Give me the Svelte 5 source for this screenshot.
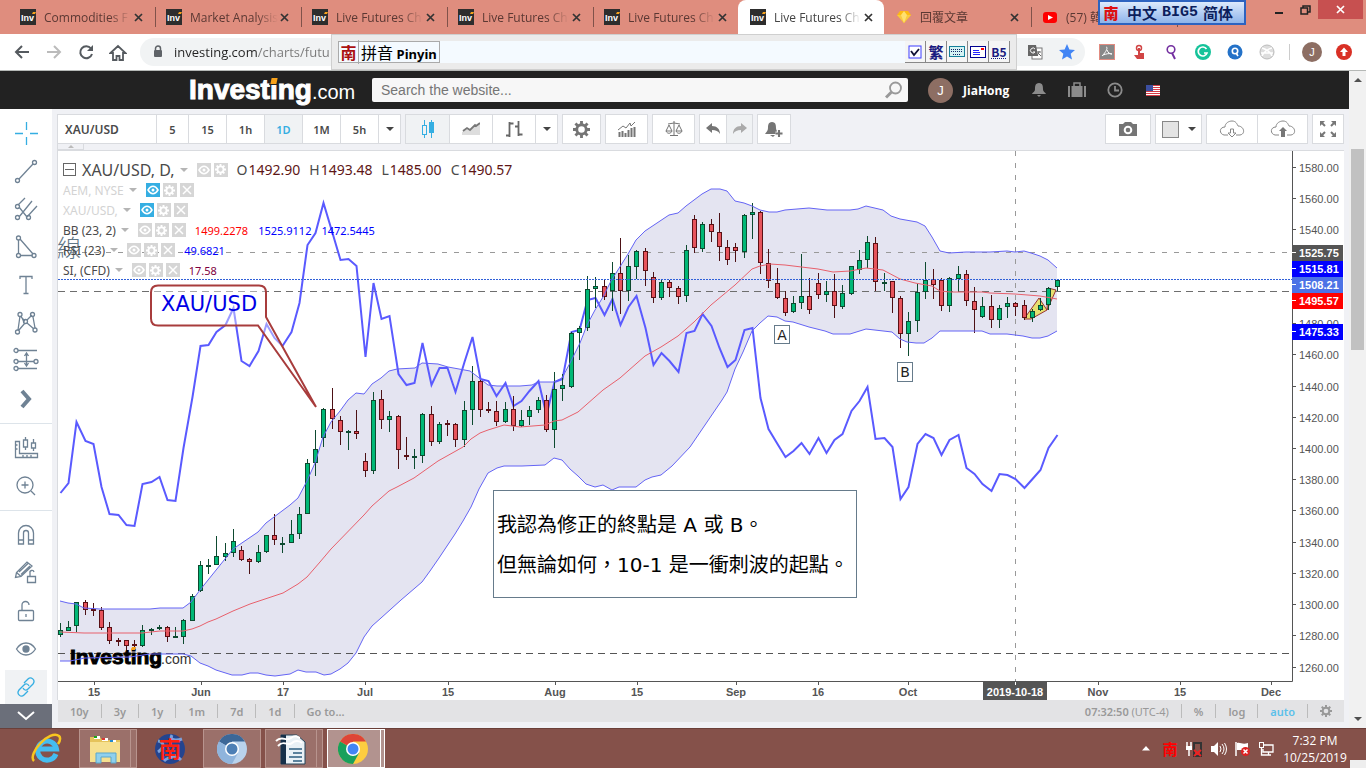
<script>
  const tabs = [
    { title: 'Commodities F', icon: 'inv' },
    { title: 'Market Analysis', icon: 'inv' },
    { title: 'Live Futures Ch', icon: 'inv' },
    { title: 'Live Futures Ch', icon: 'inv' },
    { title: 'Live Futures Ch', icon: 'inv' },
    { title: 'Live Futures Ch', icon: 'inv', active: true },
    { title: '回覆文章', icon: 'gem' },
    { title: '(57) 韓', icon: 'tube' }
  ];

  const extensions = ['pdf', 'touch', 'pin', 'grammar', 'lookup', 'globe'];
  const intervals = ['5', '15', '1h', '1D', '1M', '5h'];
  const ranges = ['10y', '3y', '1y', '1m', '7d', '1d', 'Go to...'];

  const toolGroups = [
    ['cross', 'trend', 'fork', 'shape', 'text', 'pattern', 'measure', 'more'],
    ['ruler', 'zoom'],
    ['magnet', 'pencil', 'lock', 'eye', 'link']
  ];

  const studies = [
    { name: 'AEM, NYSE', muted: true, values: [] },
    { name: 'XAU/USD,', muted: true, values: [] },
    { name: 'BB (23, 2)', values: [['1499.2278', 'red'], ['1525.9112', 'blue'], ['1472.5445', 'blue']] },
    { name: 'RSI (23)', values: [['49.6821', 'blue']] },
    { name: 'SI, (CFD)', values: [['17.58', 'wine']] }
  ];

  const ohlc = [['O', '1492.90'], ['H', '1493.48'], ['L', '1485.00'], ['C', '1490.57']];

  // high, body top, body bottom, low, direction (1 = up)
  const candles = [
    [623,630,635,637,1],[621,627,631,631,1],[602,602,626,632,1],[600,602,610,615,0],[603,609,611,616,0],
    [607,610,628,630,0],[622,627,641,644,0],[638,640,641,646,0],[640,640,646,650,0],[640,644,646,647,0],
    [625,630,646,647,1],[628,629,630,635,1],[625,627,629,630,1],[626,627,637,642,0],[627,636,637,637,1],
    [619,620,637,644,1],[594,596,621,621,1],[561,565,591,592,1],[559,565,566,574,1],[536,556,565,565,1],
    [543,553,557,561,1],[529,541,553,557,1],[546,550,560,561,0],[558,559,562,574,0],[545,552,562,563,1],
    [535,535,552,553,1],[514,535,540,545,0],[537,543,544,553,1],[520,534,543,543,1],[507,514,534,539,1],
    [459,463,514,514,1],[430,449,463,476,1],[408,409,438,447,1],[388,409,419,429,0],[416,420,432,445,0],
    [430,431,432,450,1],[410,431,434,439,0],[453,461,471,477,0],[392,400,471,474,1],[390,399,420,429,0],
    [411,416,420,432,1],[415,416,450,469,0],[437,455,457,460,0],[449,456,457,469,1],[413,414,456,463,1],
    [406,414,442,446,0],[422,424,442,444,1],[420,423,424,436,0],[423,424,440,447,0],[401,410,440,447,1],
    [366,381,410,425,1],[380,381,410,417,0],[402,409,411,413,0],[401,411,422,426,0],[402,409,422,423,1],
    [396,409,426,431,0],[410,420,426,427,1],[406,410,417,425,1],[397,400,410,413,1],[395,400,430,432,0],
    [372,389,430,448,1],[374,385,389,401,1],[332,333,387,388,1],[326,328,333,360,1],[276,289,328,331,1],
    [277,286,289,308,1],[279,286,297,300,0],[262,273,291,311,1],[238,273,291,314,0],[255,266,291,301,1],
    [250,251,267,279,1],[248,251,271,286,0],[272,277,298,303,0],[280,282,298,300,1],[280,282,288,297,0],
    [286,288,297,304,0],[245,250,296,302,1],[215,219,248,253,0],[222,224,249,252,1],[219,224,232,242,0],
    [213,232,247,261,0],[240,247,260,265,0],[243,247,251,262,0],[214,215,252,258,1],[203,212,215,239,1],
    [211,212,263,274,0],[249,263,281,288,0],[268,283,298,299,0],[291,298,313,316,0],[296,303,312,313,1],
    [254,296,303,309,1],[278,296,310,314,0],[273,283,295,299,0],[281,291,295,302,1],[274,291,306,318,0],
    [285,293,307,309,1],[266,266,294,295,1],[250,260,270,274,1],[236,242,260,268,1],[237,243,282,291,0],
    [273,282,283,291,1],[281,281,298,313,0],[296,298,334,348,0],[312,321,334,356,1],[284,292,321,332,1],
    [262,280,292,299,1],[269,279,285,299,0],[278,280,306,311,0],[277,278,306,312,1],[266,274,279,292,1],
    [270,274,301,306,0],[287,301,310,333,0],[297,306,317,318,1],[295,306,320,328,0],[305,308,320,328,1],
    [297,303,307,318,1],[302,303,307,316,0],[300,305,318,320,0],[309,311,318,322,1],[298,305,310,311,1],
    [287,288,305,310,1],[280,280,287,291,1]
  ];

  const rsi = [
    493,483,422,441,444,487,514,515,525,526,484,482,477,500,501,448,397,346,345,332,325,308,361,366,351,324,
    338,346,332,303,245,233,203,233,260,259,266,357,283,319,316,374,385,383,343,385,368,368,392,362,337,379,
    381,396,383,406,401,391,381,415,382,379,332,330,300,298,315,299,325,307,296,328,365,353,361,372,333,331,
    314,326,348,367,360,330,328,398,429,444,457,451,443,454,438,453,440,434,411,401,387,439,438,447,499,487,
    444,434,438,455,440,435,468,474,484,491,474,475,479,488,479,470,448,435
  ];

  const upper = '60,601 68,603 76,604 84,608 100,609 150,609 160,608 183,608 191,602 200,590 233,549 258,532 266,523 290,505 298,498 307,481 315,463 323,437 331,422 340,411 348,400 356,393 364,394 372,384 381,378 389,371 397,369 415,368 422,363 438,364 448,367 470,371 478,377 488,385 497,386 520,386 532,385 538,382 554,382 562,378 570,363 580,343 587,325 595,310 603,297 611,281 628,254 636,240 645,231 669,215 678,213 686,206 702,194 711,189 720,189 727,191 735,201 744,203 752,206 760,210 769,212 777,212 785,210 809,208 827,210 850,210 858,209 866,206 883,210 891,216 900,219 917,222 925,226 932,237 940,251 949,253 966,252 990,252 1007,251 1015,252 1024,251 1031,253 1040,256 1048,260 1057,268';
  const lower = '60,661 70,661 85,658 130,657 150,654 183,654 191,656 200,663 208,666 216,670 232,675 242,675 250,673 258,673 266,675 275,676 290,674 298,670 306,672 316,672 324,675 331,674 340,669 348,663 356,653 364,637 372,626 381,618 401,600 422,582 430,571 439,558 455,534 463,521 471,507 479,489 488,473 497,468 504,466 522,466 545,465 554,458 562,460 570,469 578,476 586,484 595,487 603,485 612,490 619,487 636,487 645,480 652,477 661,475 672,466 690,447 705,425 722,400 727,392 735,369 743,352 752,331 760,323 768,316 777,317 785,321 793,322 809,327 825,331 833,334 850,334 866,329 892,332 900,339 907,342 916,343 924,343 932,338 940,331 982,331 990,334 1007,334 1023,336 1032,338 1040,338 1048,336 1057,331';
  const middle = '60,632 84,633 142,633 160,631 183,631 192,629 200,626 208,622 216,619 233,611 250,604 283,593 298,584 307,577 320,562 331,549 364,515 372,506 389,491 397,487 414,478 438,461 463,447 471,439 480,433 488,430 504,425 520,427 545,425 554,421 562,420 570,416 578,412 603,390 620,378 645,356 661,347 678,336 694,322 711,305 735,285 752,269 760,266 770,264 785,265 818,269 833,272 850,271 866,268 883,270 900,279 915,283 932,286 940,291 950,292 982,292 990,293 1015,294 1040,296 1057,299';

  const barX = (i) => Math.floor(60.4 + i * 8.237);
  const band = upper + ' ' + lower.split(' ').reverse().join(' ');
  const rsiPoints = rsi.map((y, i) => `${barX(i) + 0.5},${y}`).join(' ');

  const prices = Array.from({ length: 17 }, (_, i) => ({
    label: (1580 - i * 20).toFixed(2),
    y: Math.round(168 + i * 31.22)
  }));

  const priceTags = [
    ['1525.75', 245, '#555555'],
    ['1515.81', 261, '#0000ff'],
    ['1508.21', 277, '#4c72e6'],
    ['1495.57', 293, '#ff0000'],
    ['1475.33', 324, '#0000ff']
  ];

  const dates = [
    ['15', 94], ['Jun', 201], ['17', 283], ['Jul', 365], ['15', 448], ['Aug', 555], ['15', 637],
    ['Sep', 736], ['16', 818], ['Oct', 908], ['Nov', 1098], ['15', 1180], ['Dec', 1271]
  ];

  let interval = $state('1D');
  let query = $state('');
</script>

{#snippet favicon(name)}
  <svg class="favicon" width="16" height="16" viewBox="0 0 16 16" aria-hidden="true">
    {#if name === 'inv'}
      <rect width="16" height="16" fill="#2d2d2d" />
      <text x="1" y="12" class="inv">Inv</text>
      <path d="M12 5l1-2h3l-1 2z" fill="#f7a21b" />
    {:else if name === 'gem'}
      <path d="M4 2h8l3 4-7 8-7-8z" fill="#fdb913" />
      <path d="M1 6h14l-7 8z" fill="#f9c940" /><path d="M5 6l3-4 3 4-3 8z" fill="#ffe070" />
    {:else}
      <rect x="1" y="3" width="14" height="11" rx="3" fill="#f00" /><path d="M6 6l5 2.500-5 2.500z" fill="#fff" />
    {/if}
  </svg>
{/snippet}

{#snippet tool(name)}
  <svg width="28" height="28" viewBox="0 0 28 28" fill="none" stroke="#6f8294" stroke-width="1.300" aria-hidden="true">
    {#if name === 'cross'}
      <path d="M14.500 3v8M14.500 18v8M3 14.500h8M18 14.500h8" stroke="#35aee2" />
    {:else if name === 'trend'}
      <path d="M7 22L21 7" /><circle cx="5.500" cy="23.500" r="2" /><circle cx="22.500" cy="5.500" r="2" />
    {:else if name === 'fork'}
      <path d="M7 12l8 10M7 22L20 6M8 8l5-5M15 22l10-11M6 10l7-7" /><circle cx="5.500" cy="11.500" r="2" /><circle cx="5.500" cy="22.500" r="2" /><circle cx="16.500" cy="22.500" r="2" />
    {:else if name === 'shape'}
      <path d="M6.500 7v14M8.500 22.500h12M8 6l13 15" /><circle cx="6.500" cy="5" r="2" /><circle cx="6.500" cy="22.500" r="2" /><circle cx="22" cy="22.500" r="2" />
    {:else if name === 'text'}
      <path d="M8 8V5.500h12V8M14 5.500v17M11.500 22.500h5" />
    {:else if name === 'pattern'}
      <path d="M6 21L8 7M9 8l4 4M15 11l5-5M21 8l2 11M7 21l6-7M15 14l7 6M9 7l3 6" /><circle cx="8" cy="5.500" r="2" /><circle cx="20.500" cy="5.500" r="2" /><circle cx="5.500" cy="23" r="2" /><circle cx="23" cy="21" r="2" /><circle cx="13.500" cy="12.500" r="2" />
    {:else if name === 'measure'}
      <path d="M6 3.500h19M6 14.500h16M6 21.500h19M14.500 6v13M12.500 9l2-3 2 3M12.500 16l2 3 2-3" /><circle cx="4" cy="3.500" r="2" /><circle cx="4" cy="14.500" r="2" /><circle cx="4" cy="21.500" r="2" /><circle cx="24" cy="14.500" r="2" />
    {:else if name === 'more'}
      <path d="M10 6l7 8-7 8" stroke-width="4" />
    {:else if name === 'ruler'}
      <path d="M3.500 7.500h4v12h18v4h-22zM3.500 11h2M3.500 15h2M11 21v2M15 21v2M19 21v2M13.500 3v3M13.500 13v3M21.500 5v4M21.500 14v3" /><path d="M11.500 6h4v7h-4zM19.500 9h4v5h-4z" />
    {:else if name === 'zoom'}
      <circle cx="13" cy="13" r="8" /><path d="M19 19l4 4M9.500 13h7M13 9.500v7" />
    {:else if name === 'magnet'}
      <path d="M6.500 23V12a7.500 7.500 0 0 1 15 0v11h-5V12a2.500 2.500 0 0 0-5 0v11zM6.500 19h5M16.500 19h5" />
    {:else if name === 'pencil'}
      <path d="M3.500 18.500l1-5L15 3l5 4L9 17.500zM4.500 13.500l4.500 4M7 13l9-8.500M9 15.500l9-8.500M15.500 17.500h8v6h-8zM18 17v-3a2 2 0 0 1 4-1" />
    {:else if name === 'lock'}
      <rect x="6.500" y="13.500" width="15" height="10" rx="1" /><path d="M10 13V8a3.500 3.500 0 0 1 7 0M14 17v3" />
    {:else if name === 'eye'}
      <path d="M4.500 14c5-8 14-8 19 0-5 8-14 8-19 0z" /><circle cx="14" cy="14" r="3" fill="#6f8294" />
    {:else if name === 'link'}
      <path d="M12 10l4-4c3-3 8 1 5 5l-5 5c-2 2-4 1-5-1M16 18l-4 4c-3 3-8-1-5-5l5-5c2-2 4-1 5 1" stroke="#35aee2" />
    {/if}
  </svg>
{/snippet}

{#snippet eye()}
  <svg width="14" height="14" viewBox="0 0 14 14"><path d="M2 7c3-5 7-5 10 0-3 5-7 5-10 0z" fill="none" stroke="#fff" stroke-width="1.500" /><circle cx="7" cy="7" r="1.500" fill="#fff" /></svg>
{/snippet}

{#snippet gear(color, size)}
  <svg width={size} height={size} viewBox="0 0 18 18" fill="none" stroke={color} aria-hidden="true">
    <circle cx="9" cy="9" r="5" stroke-width="3" />
    <path d="M9 0v4M9 14v4M0 9h4M14 9h4M2.600 2.600l3 3M12.400 12.400l3 3M15.400 2.600l-3 3M5.600 12.400l-3 3" stroke-width="3" />
  </svg>
{/snippet}

{#snippet chromeLogo(a, b, c, d)}
  <svg width="30" height="30" viewBox="0 0 30 30" aria-hidden="true">
    <circle cx="15" cy="15" r="15" fill={c} />
    <path d="M15 15L2 7.500A15 15 0 0 1 28 7.500H15z" fill={a} />
    <path d="M2 7.500A15 15 0 0 0 15 30l6-11-6-4z" fill={b} />
    <circle cx="15" cy="15" r="7" fill="#fff" /><circle cx="15" cy="15" r="5.500" fill={d} />
  </svg>
{/snippet}

<div class="screen">
  <div class="tabstrip">
    {#each tabs as tab}
      <div class="tab" class:active={tab.active}>
        {@render favicon(tab.icon)}
        <a class="tab-title" href="#tab">{tab.title}</a>
        <button class="tab-close" aria-label="Close tab">
          <svg width="9" height="9" viewBox="0 0 9 9"><path d="M1 1l7 7M8 1L1 8" stroke="#333" stroke-width="1.700" /></svg>
        </button>
      </div>
    {/each}
    <div class="window-buttons">
      <button aria-label="Minimize"><svg width="10" height="10" viewBox="0 0 10 10"><path d="M1 8h8" stroke="#222" stroke-width="2" /></svg></button>
      <button aria-label="Restore"><svg width="11" height="10" viewBox="0 0 11 10"><path d="M1 3h6.500v6H1zM3 3V1h7v6H8" fill="none" stroke="#222" stroke-width="1.500" /></svg></button>
      <button class="quit" aria-label="Close"><svg width="9" height="9" viewBox="0 0 9 9"><path d="M1 1l7 7M8 1L1 8" stroke="#fff" stroke-width="1.700" /></svg></button>
    </div>
    <div class="ime-badge"><b>南</b><span>中文</span><span>BIG5</span><span>简体</span></div>
  </div>

  <div class="navbar">
    <button aria-label="Back"><svg width="16" height="16" viewBox="0 0 16 16"><path d="M15 8H2M8 2L2 8l6 6" fill="none" stroke="#555a5f" stroke-width="2" /></svg></button>
    <button aria-label="Forward"><svg width="16" height="16" viewBox="0 0 16 16"><path d="M1 8h13M8 2l6 6-6 6" fill="none" stroke="#bbb" stroke-width="2" /></svg></button>
    <button aria-label="Reload"><svg width="16" height="16" viewBox="0 0 16 16"><path d="M13 4.500A6 6 0 1 0 14 10" fill="none" stroke="#555a5f" stroke-width="2" /><path d="M15 1v6H9z" fill="#555a5f" /></svg></button>
    <button aria-label="Home"><svg width="18" height="17" viewBox="0 0 18 17"><path d="M1.500 9L9 2l7.500 7H14v7h-3.500v-4h-3v4H4V9z" fill="none" stroke="#555a5f" stroke-width="1.800" /></svg></button>
    <div class="address">
      <svg width="10" height="14" viewBox="0 0 10 14" aria-hidden="true"><rect x="1" y="5" width="8" height="7" rx="1" fill="#5f6368" /><path d="M2.500 5V3.500a2.500 2.500 0 0 1 5 0V5" fill="none" stroke="#5f6368" stroke-width="1.500" /></svg>
      <input aria-label="Address" value="investing.com/charts/futu" />
      <button aria-label="Translate"><svg width="16" height="16" viewBox="0 0 16 16"><rect x="5" y="4" width="10" height="11" fill="#fff" stroke="#777" /><path d="M1 1h8l2 11H1z" fill="#666" /><path d="M8 5a2.500 2.500 0 1 0 0 3H6" fill="none" stroke="#fff" /><path d="M9.500 8H14M12 7v1l-2 4M11 9l3 3" fill="none" stroke="#666" /></svg></button>
      <button aria-label="Bookmark"><svg width="16" height="16" viewBox="0 0 16 16"><path d="M8 0l2.400 5.500 5.600.5-4.300 3.800L13 15.500 8 12.400 3 15.500l1.300-5.700L0 6l5.600-.5z" fill="#4285f4" /></svg></button>
    </div>
    {#each extensions as name}
      <button aria-label={name}>
        <svg width="16" height="16" viewBox="0 0 16 16">
          {#if name === 'pdf'}
            <rect x=".5" y=".5" width="15" height="15" fill="#888" stroke="#e28b80" /><path d="M7 3c2 0 1 4-4 9M8 6c1 3 3 4 5 4-3-1-6 0-9 1" fill="none" stroke="#fff" />
          {:else if name === 'touch'}
            <circle cx="8" cy="4" r="2.500" fill="none" stroke="#d14545" stroke-width="1.500" /><path d="M7 4h2v5h4v6H6l-3-4h4z" fill="#d14545" />
          {:else if name === 'pin'}
            <circle cx="8" cy="5.500" r="3.800" fill="none" stroke="#7430a0" stroke-width="1.600" /><path d="M9 9l3 6" stroke="#7430a0" stroke-width="2" />
          {:else if name === 'grammar'}
            <circle cx="8" cy="8" r="8" fill="#15c39a" /><path d="M11.500 5A4.500 4.500 0 1 0 12 9H9" fill="none" stroke="#fff" stroke-width="1.700" />
          {:else if name === 'lookup'}
            <circle cx="8" cy="8" r="7.500" fill="#2472c8" /><circle cx="8" cy="7" r="2.700" fill="none" stroke="#fff" stroke-width="1.600" /><path d="M9 9l2 3" stroke="#fff" stroke-width="1.600" />
          {:else}
            <circle cx="8" cy="8" r="7" fill="#ddd" stroke="#bbb" /><path d="M3 4c6 2 9 5 10 8M13 4C9 5 5 8 3 12M2 9h12" fill="none" stroke="#fff" stroke-width="1.500" />
          {/if}
        </svg>
      </button>
    {/each}
    <i class="rule"></i>
    <button aria-label="Profile"><span class="avatar small">J</span></button>
    <button aria-label="Update"><svg width="16" height="16" viewBox="0 0 16 16"><circle cx="8" cy="8" r="8" fill="#d93025" /><path d="M8 3.500l4 4.500H9.500v4h-3V8H4z" fill="#fff" /></svg></button>

    <div class="ime-bar">
      <div class="ime-name"><b>南</b><span>拼音 <strong>Pinyin</strong></span></div>
      <div class="ime-keys">
        <button aria-label="Check"><svg width="14" height="14" viewBox="0 0 14 14"><rect x="1" y="1" width="12" height="12" fill="#fff" stroke="#3c3cff" /><path d="M3 6l3 4 5-6" fill="none" stroke="#113" stroke-width="1.800" /></svg></button>
        <button>繁</button>
        <button aria-label="Keyboard"><svg width="16" height="12" viewBox="0 0 16 12"><rect x=".5" y=".5" width="15" height="10" fill="#d5f3f3" stroke="#15809a" /><path d="M2 3.500h12M2 5.500h12M4 8.500h8" stroke="#126" stroke-dasharray="1 1" /></svg></button>
        <button aria-label="Mail"><svg width="16" height="12" viewBox="0 0 16 12"><rect x=".5" y=".5" width="15" height="11" fill="#fff" stroke="#000090" /><path d="M3 4.500h6M3 6.500h7M3 8.500h7" stroke="#22f" /><rect x="11" y="2" width="3" height="2" fill="red" /></svg></button>
        <button class="b5">B5</button>
      </div>
    </div>
  </div>

  <div class="page">
    <div class="page-body">
      <header>
        <div class="header-inner">
          <a class="brand" href="#home">Inves<span class="ti">ti</span>ng<small>.com</small></a>
          <label class="search">
            <input placeholder="Search the website..." aria-label="Search the website" bind:value={query} />
            <svg width="18" height="18" viewBox="0 0 18 18" aria-hidden="true"><circle cx="10.500" cy="7" r="5.500" fill="none" stroke="#999" stroke-width="1.800" /><path d="M6.500 11L1 16.500" stroke="#999" stroke-width="3" /></svg>
          </label>
          <span class="avatar">J</span>
          <a class="user" href="#user">JiaHong</a>
          <div class="header-icons">
            <button aria-label="Alerts"><svg width="14" height="16" viewBox="0 0 14 16"><path d="M7 1c4 0 4 4 4 6 0 3 2 3 3 5H0c1-2 3-2 3-5 0-2 0-6 4-6zM5 13h4l-2 2z" fill="#8b8b8b" /></svg></button>
            <button aria-label="Portfolio"><svg width="18" height="16" viewBox="0 0 18 16"><path d="M0 4h2v11H0zM3.500 4h11v11h-11zM16 4h2v11h-2z" fill="#8b8b8b" /><path d="M6 4V1h6v3" fill="none" stroke="#8b8b8b" stroke-width="1.500" /></svg></button>
            <button aria-label="History"><svg width="16" height="16" viewBox="0 0 16 16"><circle cx="8" cy="8" r="6.700" fill="none" stroke="#8b8b8b" stroke-width="1.800" /><path d="M8 4v4.500h4" fill="none" stroke="#8b8b8b" stroke-width="1.800" /></svg></button>
            <button aria-label="Language"><svg width="14" height="11" viewBox="0 0 14 11"><rect width="14" height="11" fill="#fff" /><path d="M0 .5h14M0 2.500h14M0 4.500h14M0 6.500h14M0 8.500h14M0 10.500h14" stroke="#d43b45" /><rect width="7" height="6" fill="#3c4fa0" /></svg></button>
          </div>
        </div>
      </header>

      <main>
        <nav class="tools" aria-label="Drawing tools">
          {#each toolGroups as group}
            <div class="tool-group">
              {#each group as name}
                <button aria-label={name} class:on={name === 'link'}>{@render tool(name)}</button>
              {/each}
            </div>
          {/each}
          <button class="tools-more" aria-label="Scroll down"><svg width="20" height="12" viewBox="0 0 20 12"><path d="M2 2l8 7 8-7" fill="none" stroke="#fff" stroke-width="2" /></svg></button>
        </nav>

        <div class="workspace">
          <div class="toolbar">
            <div class="group">
              <button class="symbol">XAU/USD</button>
              {#each intervals as item}
                <button class="interval" class:on={interval === item} onclick={() => (interval = item)}>{item}</button>
              {/each}
              <button class="narrow" aria-label="More intervals"><i class="caret"></i></button>
            </div>
            <div class="group">
              <button class="wide on" aria-label="Candles"><svg width="14" height="20" viewBox="0 0 14 20"><path d="M3.500 1v18M10.500 1v18" stroke="#35aee2" /><rect x="1.500" y="6.500" width="4" height="9" fill="#f0f2f4" stroke="#35aee2" /><rect x="8" y="3" width="5" height="11" fill="#35aee2" /></svg></button>
              <button class="wide" aria-label="Area"><svg width="18" height="14" viewBox="0 0 18 14"><path d="M0 10l5-3 3 2 5-5 5-2v11H0z" fill="#ddd" /><path d="M1 9l4-3 3 2 5-5 1 1 4-3" fill="none" stroke="#777" stroke-width="1.800" /></svg></button>
              <button class="wide" aria-label="Bars"><svg width="18" height="18" viewBox="0 0 18 18"><path d="M4.500 2v15M1 15.500h3M4.500 3.500h4M13.500 1v15M10 6.500h3M13.500 14.500h4" fill="none" stroke="#666" stroke-width="1.800" /></svg></button>
              <button class="narrow" aria-label="More styles"><i class="caret"></i></button>
            </div>
            <div class="group"><button class="gear" aria-label="Settings">{@render gear('#757575', 17)}</button></div>
            <div class="group"><button class="solo" aria-label="Indicators"><svg width="18" height="16" viewBox="0 0 18 16"><path d="M1.500 16v-5M4.500 16v-6M7.500 16v-4M10.500 16V9M13.500 16V7M16.500 16V6" stroke="#757575" stroke-width="2" /><path d="M0 9l5-4 3 2 4-5 1 3 4-4" fill="none" stroke="#757575" /></svg></button></div>
            <div class="group"><button class="solo" aria-label="Compare"><svg width="18" height="16" viewBox="0 0 18 16"><path d="M3 3l6-1 6 1M9 0v14M5 14.500h8M4 4L1 10h6zM14 4l-3 6h6zM1 10c1 3 5 3 6 0M11 10c1 3 5 3 6 0" fill="none" stroke="#757575" /></svg></button></div>
            <div class="group undo">
              <button aria-label="Undo"><svg width="14" height="12" viewBox="0 0 14 12"><path d="M0 5l6-5v3c5 0 8 3 8 8-2-3-4-4-8-4v3z" fill="#757575" /></svg></button>
              <button class="off" aria-label="Redo"><svg width="14" height="12" viewBox="0 0 14 12"><path d="M14 5L8 0v3C3 3 0 6 0 11c2-3 4-4 8-4v3z" fill="#aaa" /></svg></button>
            </div>
            <div class="group"><button class="bell" aria-label="Add alert"><svg width="19" height="17" viewBox="0 0 19 17"><path d="M7 1c4 0 4 4 4 6s1 3 2 4l1 2H0c1-2 3-3 3-6 0-2 0-6 4-6zM5 14h5l-2 2z" fill="#757575" /><path d="M14 9v7M10.500 12.500h7" stroke="#f8f8f8" stroke-width="4" /><path d="M14 9v7M10.500 12.500h7" stroke="#757575" stroke-width="2" /></svg></button></div>

            <div class="group push"><button class="shot" aria-label="Snapshot"><svg width="20" height="16" viewBox="0 0 20 16"><path d="M1 3h4l2-2h6l2 2h4v12H1z" fill="#757575" /><circle cx="10" cy="9" r="3.300" fill="none" stroke="#fff" stroke-width="2" /></svg></button></div>
            <div class="group"><button class="swatch" aria-label="Background"><i></i><i class="caret"></i></button></div>
            <div class="group clouds">
              {#each ['Load', 'Save'] as name}
                <button aria-label={name}><svg width="26" height="19" viewBox="0 0 26 19"><path d="M9 15H5c-5-1-5-8 1-8 0-4 4-6 7-6 4 0 5 3 6 5 6 0 8 8 2 9h-4" fill="none" stroke="#888" />
                  {#if name === 'Load'}<path d="M11.500 9h3v4H17l-4 4-4-4h2.500z" fill="#fff" stroke="#888" />{:else}<path d="M13 7l4 4h-2v6h-4v-6H9z" fill="#777" />{/if}</svg></button>
              {/each}
            </div>
            <div class="group"><button class="full" aria-label="Full screen"><svg width="18" height="18" viewBox="0 0 18 18"><path d="M1 1h5L1 6zM17 1h-5l5 5zM1 17h5l-5-5zM17 17h-5l5-5z" fill="#777" /><path d="M2 2l4 4M16 2l-4 4M2 16l4-4M16 16l-4-4" stroke="#777" stroke-width="2" /></svg></button></div>
            <button class="fold" aria-label="Collapse"><i></i></button>
          </div>

          <section class="chart">
            <svg class="plot" viewBox="58 151 1286 549" role="img" aria-label="XAU/USD daily">
              <polygon points={band} fill="#e4e4f1" />
              <path d="M58 291.500H1292" stroke="#6e6e6e" stroke-dasharray="7 5" />
              <path d="M58 653.500H1292" stroke="#555" stroke-dasharray="7 5" />
              <path d="M58 252.500H1292M1015.500 151V681" stroke="#999" stroke-dasharray="5 7" />

              <g class="brand-mark">
                <text x="70" y="664" class="mark-bold">Investing</text>
                <text x="161" y="664" class="mark-thin">.com</text>
                <path d="M131 650l1-3h4l-1 3z" fill="#f7a21b" />
              </g>

              <polyline points={rsiPoints} class="rsi" />
              <path d="M1024 319L1039 298 1047 310 1031 319zM1047 310L1056 290 1048 288z" class="wave" />

              {#each candles as [high, top, bottom, low, up], i}
                <path d="M{barX(i) + 0.5} {high}V{low}" stroke={up ? '#0e4a30' : '#4c1115'} />
                <rect x={barX(i) - 1.5} y={top + 0.5} width="4" height={Math.max(bottom - top - 1, 1)}
                  fill={up ? '#00b876' : '#e6545c'} stroke={up ? '#0e4a30' : '#5a1015'} />
              {/each}

              <polyline points={upper} class="band-line" />
              <polyline points={lower} class="band-line" />
              <polyline points={middle} class="mid-line" />
              <path d="M58 279.500H1292" stroke="#3060d8" stroke-dasharray="2 1" />

              <path d="M158 285.500h101q7 0 7 7v24.500L316 407 258 325.500H158q-7 0-7-7v-26q0-7 7-7z" class="callout" />
              <text x="161" y="311" class="callout-text">XAU/USD</text>
              <text x="57" y="257" class="cut">線</text>

              <rect x="774.500" y="325.500" width="15" height="18" class="point" />
              <text x="782" y="340" class="point-text">A</text>
              <rect x="897.500" y="362.500" width="15" height="19" class="point" />
              <text x="905" y="377" class="point-text">B</text>

              <rect x="493.500" y="490.500" width="363" height="107" class="note" />
              <text x="497" y="532" class="note-text">我認為修正的終點是 A 或 B。</text>
              <text x="497" y="572" class="note-text">但無論如何，10-1 是一衝刺波的起點。</text>

              <path d="M1292.500 151V681.500H58" fill="none" stroke="#555" />
              {#each prices as { label, y }}
                <path d="M1292 {y - 0.5}h4" stroke="#555" />
                <text x="1299" y={y + 4} class="axis">{label}</text>
              {/each}
              {#each priceTags as [label, y, fill]}
                <rect x="1292" {y} width="51" height="16" {fill} />
                <path d="M1292 {y + 7.5}h4" stroke="#fff" />
                <text x="1299" y={y + 12} class="axis tag">{label}</text>
              {/each}
              {#each dates as [label, x]}
                <path d="M{x + 0.5} 682v3" stroke="#555" />
                <text {x} y="696" class="axis date">{label}</text>
              {/each}
              <rect x="983" y="682" width="64" height="18" fill="#555" />
              <path d="M1015.500 682v3" stroke="#fff" />
              <text x="1015" y="696" class="axis date tag">2019-10-18</text>
            </svg>

            <div class="legend">
              <div class="legend-main">
                <button class="minus" aria-label="Collapse legend"></button>
                <span>XAU/USD, D,</span><i class="caret"></i>
                <div class="study-buttons">
                  <button aria-label="Hide">{@render eye()}</button>
                  <button aria-label="Format">{@render gear('#fff', 11)}</button>
                </div>
                {#each ohlc as [key, value]}<span class="ohlc">{key}<b>{value}</b></span>{/each}
              </div>
              {#each studies as study}
                <div class="study" class:muted={study.muted}>
                  <span>{study.name}</span><i class="caret"></i>
                  <div class="study-buttons">
                    <button class:lit={study.muted} aria-label="Show">{@render eye()}</button>
                    <button aria-label="Format">{@render gear('#fff', 11)}</button>
                    <button aria-label="Remove"><svg width="12" height="12" viewBox="0 0 12 12"><path d="M2 2l8 8M10 2l-8 8" stroke="#fff" stroke-width="1.500" /></svg></button>
                  </div>
                  {#each study.values as [value, tone]}<span class="value {tone}">{value}</span>{/each}
                </div>
              {/each}
            </div>
          </section>

          <footer>
            {#each ranges as range}<button>{range}</button>{/each}
            <span class="clock">07:32:50 <small>(UTC-4)</small></span>
            <button>%</button><button>log</button><button class="auto">auto</button>
            <button aria-label="Chart settings">{@render gear('#999', 12)}</button>
          </footer>
        </div>
      </main>
    </div>
    <div class="scrollbar"><i class="up"></i><b></b><i class="down"></i></div>
  </div>

  <div class="taskbar">
    <button class="app" aria-label="Internet Explorer">
      <svg width="32" height="32" viewBox="0 0 32 32"><path d="M26 21A9.500 9.500 0 1 1 26.500 16H10" fill="none" stroke="#45bdf0" stroke-width="5" /><path d="M4 28C-3 21 20-4 29 3c2 2 1 5-1 8" fill="none" stroke="#f8c51e" stroke-width="2.500" /></svg>
    </button>
    <button class="app boxed stacked" aria-label="Explorer">
      <svg width="34" height="32" viewBox="0 0 34 32"><path d="M2 4h10l2 3h18v22H2z" fill="#e5c35b" /><path d="M6 3h6v3H6zM14 5h6v3h-6zM22 7h6v3h-6z" fill="#fff" /><path d="M6 3h3v2H6z" fill="#19a619" /><path d="M14 5h3v2h-3z" fill="#d33" /><path d="M22 7h3v2h-3z" fill="#28c" /><path d="M2 9h30v20H2z" fill="#f6e08f" /><path d="M8 30V20h20v10h-5v-6H13v6z" fill="#8fd0ee" stroke="#5aa7cc" /></svg>
    </button>
    <button class="app" aria-label="NJStar">
      <svg width="32" height="32" viewBox="0 0 32 32"><circle cx="16" cy="16" r="15" fill="#24448f" /><path d="M4 8c7 1 6 7 0 11M18 2c-3 5 4 6 10 4M10 28c5-5 13-5 17-1" fill="none" stroke="#7ca0da" stroke-width="3" /><text x="5" y="24" class="nan">南</text></svg>
    </button>
    <button class="app boxed" aria-label="Chromium">{@render chromeLogo('#3c6797', '#8fb4dc', '#b9d2ec', '#4d7fb5')}</button>
    <button class="app boxed stacked" aria-label="Writer">
      <svg width="32" height="32" viewBox="0 0 32 32"><path d="M6 2h16l8 7v22H6z" fill="#e9f1f6" stroke="#23445a" /><path d="M6 2h5v29H6z" fill="#16304a" /><path d="M14 16h13M18 20h9M14 24h13M18 28h9" stroke="#2d5d80" stroke-width="1.500" /><path d="M1 8c6-6 10 1 15-3s8 0 9 0M3 13c6-7 10 1 14-3s9-1 10 0" fill="none" stroke="#fff" stroke-width="2" /></svg>
    </button>
    <button class="app boxed stacked current" aria-label="Chrome">{@render chromeLogo('#de4437', '#18a05d', '#fdcd40', '#4285f4')}</button>

    <div class="tray">
      <button aria-label="Show hidden icons"><svg width="8" height="5" viewBox="0 0 8 5"><path d="M4 0l4 4.500H0z" fill="#fff" /></svg></button>
      <button class="tray-nan">南</button>
      <button aria-label="Power"><svg width="18" height="16" viewBox="0 0 18 16"><path d="M2 1v4M6 1v4M4 9v6" stroke="#fff" stroke-width="1.500" /><path d="M1 5h6v4H1z" fill="#fff" /><rect x="9" y="2" width="7" height="13" fill="none" stroke="#333" stroke-width="2" /><path d="M9 9l7 6M16 9l-7 6" stroke="#e22" stroke-width="2" /></svg></button>
      <button aria-label="Volume"><svg width="17" height="16" viewBox="0 0 17 16"><path d="M1 5h3l4-4v14l-4-4H1z" fill="#fff" /><path d="M10 5q2 3 0 6M12 3q4 5 0 10M14.500 2q4 6 0 12" fill="none" stroke="#fff" /></svg></button>
      <button aria-label="Action center"><svg width="17" height="16" viewBox="0 0 17 16"><path d="M2 1v14" stroke="#fff" stroke-width="1.500" /><path d="M3 2c4-1 5 2 11 0v7H3z" fill="#fff" /><circle cx="11.500" cy="10.500" r="4.500" fill="#d22" /><path d="M9.500 8.500l4 4M13.500 8.500l-4 4" stroke="#fff" stroke-width="1.500" /></svg></button>
      <button aria-label="Network"><svg width="16" height="16" viewBox="0 0 16 16"><path d="M6 4h9v7H5V8M8 14h5M10.500 11v3M3.500 7v7h5" fill="none" stroke="#fff" stroke-width="1.300" /><rect x="1.500" y="1.500" width="4" height="5" fill="none" stroke="#fff" /></svg></button>
      <div class="time"><span>7:32 PM</span><span>10/25/2019</span></div>
    </div>
    <i class="corner"></i>
  </div>
</div>

<style>
  :global(body) {
    background: #f0f1f5;
    font-family: 'Noto Sans', 'Noto Sans CJK TC', sans-serif;
    font-size: 12px;
    color: #4a4a4a;
  }

  .screen, .screen * {
    box-sizing: border-box;
  }

  .screen {
    display: flex;
    flex-direction: column;
    min-height: 100vh;
    overflow: hidden;
  }

  button {
    display: flex;
    align-items: center;
    justify-content: center;
    padding: 0;
    border: 0;
    background: none;
    color: inherit;
    font: inherit;
  }

  a {
    color: inherit;
    text-decoration: none;
  }

  svg {
    display: block;
    flex: none;
  }

  .caret {
    border: 4px solid transparent;
    border-top-color: #444;
    border-bottom: 0;
  }

  /* browser window */
  .tabstrip {
    position: relative;
    display: flex;
    height: 34px;
    padding-left: 8px;
    background: #df8d7e;
  }

  .tab {
    position: relative;
    display: flex;
    align-items: center;
    width: 146px;
    padding: 0 8px 0 12px;
    font-family: 'Open Sans', 'Noto Sans CJK TC', sans-serif;
    color: #5b3833;
  }

  .tab::after {
    content: '';
    position: absolute;
    right: -2px;
    top: 7px;
    height: 20px;
    border-right: 1px solid #80524a;
  }

  .tab.active {
    background: #fff;
    border-radius: 8px 8px 0 0;
    color: #444;
  }

  .tab.active::after, .tab:has(+ .active)::after {
    display: none;
  }

  .favicon .inv {
    font: bold 9px 'Liberation Sans', sans-serif;
    fill: #fff;
  }

  .tab-title {
    flex: 1;
    margin-left: 8px;
    white-space: nowrap;
    mask-image: linear-gradient(to right, #000 75%, transparent 100%);
  }

  .tab-close {
    width: 15px;
    height: 16px;
  }

  .window-buttons {
    display: flex;
    align-items: flex-start;
    margin-left: auto;
    padding-right: 3px;
  }

  .window-buttons button {
    width: 26px;
    height: 19px;
  }

  .window-buttons .quit {
    width: 45px;
    background: #c75050;
  }

  .ime-badge {
    position: absolute;
    right: 120px;
    top: 0;
    display: flex;
    align-items: center;
    gap: 5px;
    width: 148px;
    height: 25px;
    border: 2px solid #2d63c0;
    background: linear-gradient(#dceafc, #8eb4ea);
    color: #0c1e5c;
    font: bold 15px 'Liberation Mono', 'Noto Sans CJK SC', monospace;
    white-space: nowrap;
  }

  .ime-badge b {
    width: 22px;
    color: #d11;
    text-align: center;
  }

  .navbar {
    position: relative;
    display: flex;
    align-items: center;
    height: 37px;
    padding: 0 6px;
    border-bottom: 1px solid #b5b8b6;
    background: #fff;
  }

  .navbar > button {
    width: 32px;
    height: 32px;
  }

  .address {
    flex: 1;
    display: flex;
    align-items: center;
    height: 28px;
    margin: 0 6px;
    padding: 0 2px 0 13px;
    border-radius: 14px;
    background: #f1f3f4;
  }

  .address input {
    flex: 1;
    margin: 0 0 0 11px;
    padding: 0;
    border: 0;
    outline: 0;
    background: linear-gradient(to right, #222 83px, #777 83px);
    background-clip: text;
    color: transparent;
    font: 13px 'Open Sans', sans-serif;
  }

  .address button {
    width: 32px;
  }

  .rule {
    height: 16px;
    margin: 0 6px;
    border-left: 1px solid #ccc;
  }

  .avatar {
    display: flex;
    align-items: center;
    justify-content: center;
    width: 25px;
    height: 25px;
    border-radius: 50%;
    background: #8d6e63;
    color: #fff;
    font: 13px 'Liberation Sans', sans-serif;
  }

  .avatar.small {
    width: 20px;
    height: 20px;
    font-size: 11px;
  }

  .ime-bar {
    position: absolute;
    left: 331px;
    right: 349px;
    top: 0;
    display: flex;
    justify-content: space-between;
    height: 36px;
    padding: 6px;
    border: 1px solid #cfcfcf;
    background: linear-gradient(#f4faff, #f4faff) 6px 6px / calc(100% - 12px) 22px no-repeat #ebebeb;
  }

  .ime-name {
    display: flex;
    align-items: center;
    border: 1px solid #aaa;
    color: #000;
    font: 16px 'Noto Sans CJK TC', sans-serif;
  }

  .ime-name b {
    width: 20px;
    border-right: 1px solid #aaa;
    color: #a11;
    text-align: center;
  }

  .ime-name span {
    padding: 0 2px;
  }

  .ime-name strong {
    font: bold 13px 'Noto Sans', sans-serif;
  }

  .ime-keys {
    display: flex;
  }

  .ime-keys button {
    width: 21px;
    border-right: 1px solid #888;
    border-bottom: 1px solid #888;
    background: #f5f5f5;
    color: #1a1a80;
    font: bold 15px 'Noto Sans CJK TC', sans-serif;
  }

  .ime-keys .b5 {
    font-size: 12px;
    text-decoration: underline dotted;
  }

  /* site */
  .page {
    flex: 1;
    display: flex;
  }

  .page-body {
    flex: 1;
    min-width: 0;
    display: flex;
    flex-direction: column;
  }

  header {
    height: 38px;
    background: #222;
  }

  .header-inner {
    display: flex;
    align-items: center;
    max-width: 971px;
    height: 38px;
    margin: 0 auto;
    color: #fff;
  }

  .brand {
    width: 183px;
    font: bold 28px 'Liberation Sans', sans-serif;
    -webkit-text-stroke: 1px #fff;
    white-space: nowrap;
  }

  .brand small {
    font-weight: normal;
    font-size: 20px;
    -webkit-text-stroke: 0;
  }

  .brand .ti {
    position: relative;
  }

  .brand .ti::after {
    content: '';
    position: absolute;
    right: 1px;
    top: 4px;
    width: 6px;
    height: 6px;
    background: #f7a21b;
    box-shadow: 0 0 0 1px #222;
    transform: skewX(-12deg);
  }

  .search {
    flex: 1;
    display: flex;
    align-items: center;
    height: 24px;
    padding: 0 5px 0 9px;
    border-radius: 2px;
    background: #f7f7f7;
  }

  .search input {
    flex: 1;
    padding: 0;
    border: 0;
    outline: 0;
    background: none;
    font: 14px 'Liberation Sans', sans-serif;
  }

  .header-inner > .avatar {
    margin: 0 10px 0 20px;
  }

  .user {
    width: 57px;
    font: bold 12px 'Open Sans', sans-serif;
  }

  .header-icons {
    display: flex;
    margin-right: -12px;
  }

  .header-icons button {
    width: 38px;
  }

  main {
    flex: 1;
    display: flex;
  }

  .tools {
    display: flex;
    flex-direction: column;
    width: 52px;
    padding-top: 5px;
    background: #fff;
  }

  .tool-group {
    padding-bottom: 5px;
  }

  .tool-group + .tool-group {
    padding-top: 5px;
    border-top: 1px solid #dde4ea;
  }

  .tool-group button {
    width: 52px;
    height: 38px;
  }

  .tool-group .on {
    width: 42px;
    height: 34px;
    margin: 2px 5px 0;
    background: #f0f2f4;
  }

  .tool-group:nth-last-child(2) {
    padding-bottom: 0;
  }

  .tools-more {
    height: 24px;
    margin-top: auto;
    background: #6b6f7a;
  }

  .workspace {
    flex: 1;
    min-width: 0;
    padding: 0 5px 6px;
  }

  .toolbar {
    position: relative;
    display: flex;
    gap: 4px;
    height: 41px;
    padding-top: 5px;
    font-weight: 600;
  }

  .group {
    display: flex;
    height: 30px;
    border: 1px solid #d9dbdf;
    background: #fff;
  }

  .group.push {
    margin-left: auto;
  }

  .group button + button {
    border-left: 1px solid #d9dbdf;
  }

  .group .symbol {
    justify-content: flex-start;
    width: 98px;
    padding-left: 7px;
    font-size: 12px;
  }

  .group .interval {
    width: 38px;
    font-size: 11px;
  }

  .group .symbol + .interval {
    width: 32px;
  }

  .group .on {
    background: #f0f2f4;
    color: #35aee2;
  }

  .group .off {
    background: #f0f2f4;
  }

  .group .narrow {
    width: 22px;
  }

  .group .wide {
    width: 43px;
  }

  .group .solo {
    width: 41px;
  }

  .group .gear {
    width: 37px;
  }

  .undo button {
    width: 26px;
  }

  .group .bell {
    width: 32px;
  }

  .group .shot {
    width: 44px;
  }

  .group .swatch {
    gap: 9px;
    width: 45px;
  }

  .swatch i:first-child {
    width: 17px;
    height: 17px;
    border: 1px solid #888;
    background: #e4e4e4;
  }

  .clouds button {
    width: 50px;
  }

  .group .full {
    width: 30px;
  }

  .fold {
    position: absolute;
    left: 0;
    bottom: 0;
    width: 27px;
    height: 7px;
    border: 1px solid #d9dbdf;
  }

  .fold i {
    border: 3px solid transparent;
    border-bottom-color: #bbb;
    border-top: 0;
  }

  .chart {
    position: relative;
    border: 1px solid #d9dbdf;
    border-width: 1px 0 0 1px;
    background: #fff;
  }

  .plot {
    width: 100%;
    height: auto;
  }

  .brand-mark text {
    font-family: 'Liberation Sans', sans-serif;
  }

  .mark-bold {
    font-size: 21px;
    font-weight: bold;
    stroke: #000;
  }

  .mark-thin {
    font-size: 14px;
    fill: #333;
  }

  .rsi {
    fill: none;
    stroke: #5a5aff;
    stroke-width: 2;
  }

  .band-line {
    fill: none;
    stroke: #6464f5;
  }

  .mid-line {
    fill: none;
    stroke: #e8606c;
  }

  .wave {
    fill: #e6e070;
    stroke: #993333;
  }

  .callout {
    fill: #fff;
    fill-opacity: 0.4;
    stroke: #a83c3c;
    stroke-width: 2;
  }

  .callout-text {
    font: 21px 'DejaVu Sans', sans-serif;
    fill: #0000e6;
  }

  .cut {
    font: 24px 'Noto Sans CJK TC', sans-serif;
    font-weight: 300;
    fill: #5f7788;
  }

  .point, .note {
    fill: #fff;
    stroke: #667b8b;
  }

  .point-text {
    font: 14px 'DejaVu Sans', sans-serif;
    fill: #222;
    text-anchor: middle;
  }

  .note-text {
    font: 20px 'DejaVu Sans', 'Noto Sans CJK TC', sans-serif;
    fill: #000;
  }

  .axis {
    font: 11px 'Liberation Sans', sans-serif;
    fill: #555;
  }

  .date {
    font-weight: bold;
    text-anchor: middle;
  }

  .tag {
    font-weight: bold;
    fill: #fff;
  }

  .legend {
    position: absolute;
    left: 5px;
    top: 8px;
    cursor: default;
  }

  .legend-main {
    display: flex;
    align-items: center;
    height: 21px;
    font-size: 16px;
  }

  .minus {
    position: relative;
    width: 13px;
    height: 13px;
    margin-right: 6px;
    border: 1px solid #666;
  }

  .minus::after {
    content: '';
    width: 9px;
    border-top: 1px solid #666;
  }

  .legend .caret {
    margin-left: 5px;
    border-top-color: #b5b5b5;
  }

  .study-buttons {
    display: flex;
    gap: 3px;
    margin: 0 9px;
  }

  .study-buttons button {
    width: 14px;
    height: 14px;
    background: #d6d6d6;
  }

  .study-buttons .lit {
    background: #35aee2;
  }

  .ohlc {
    margin-right: 9px;
    font-size: 14px;
  }

  .ohlc b {
    margin-left: 1px;
    color: #5e1616;
    font-weight: normal;
  }

  .study {
    display: flex;
    align-items: center;
    height: 20px;
  }

  .study.muted {
    color: #d3d3d3;
  }

  .value {
    margin-right: 10px;
    font-size: 11px;
  }

  .red {
    color: #f00;
  }

  .blue {
    color: #00f;
  }

  .wine {
    color: #800040;
  }

  footer {
    display: flex;
    align-items: center;
    height: 22px;
    margin-left: 1px;
    background: #e3e3e5;
    color: #999;
    font-weight: 600;
    font-size: 11px;
  }

  footer button {
    height: 14px;
    padding: 0 12px;
  }

  footer button + button {
    border-left: 1px solid #bbb;
  }

  .clock {
    margin-left: auto;
    margin-right: 12px;
  }

  .clock + button {
    border-left: 1px solid #bbb;
  }

  .clock small {
    font-size: 11px;
    font-weight: normal;
  }

  .auto {
    color: #5bc0ea;
  }

  .scrollbar {
    display: flex;
    flex-direction: column;
    align-items: center;
    width: 17px;
    padding: 7px 0;
    background: #f1f1f1;
  }

  .scrollbar b {
    width: 13px;
    height: 201px;
    margin-top: 67px;
    background: #c1c1c1;
  }

  .scrollbar .up {
    border: 4px solid transparent;
    border-bottom-color: #505050;
    border-top: 0;
  }

  .scrollbar .down {
    margin-top: auto;
    border: 4px solid transparent;
    border-top-color: #505050;
    border-bottom: 0;
  }

  /* taskbar */
  .taskbar {
    position: relative;
    display: flex;
    gap: 4px;
    height: 40px;
    padding-left: 17px;
    border-top: 1px solid #6a3f39;
    background: #85514a;
    color: #fff;
  }

  .app {
    width: 58px;
  }

  .boxed {
    border: 1px solid #b8948e;
    background: #9b706a;
  }

  .stacked {
    padding-right: 7px;
    background: linear-gradient(#b8948e, #b8948e) 50px 0 / 1px 100% no-repeat #9b706a;
  }

  .current {
    border: 1px solid #fff;
    background: linear-gradient(#fff, #fff) 52px 0 / 1px 100% no-repeat #b2938f;
  }

  .nan {
    font: bold 22px 'Noto Sans CJK TC', sans-serif;
    fill: #ff2010;
  }

  .tray {
    display: flex;
    align-items: center;
    margin-left: auto;
    padding-right: 16px;
  }

  .tray button {
    width: 24px;
  }

  .tray-nan {
    color: #f00;
    font: bold 15px 'Noto Sans CJK TC', sans-serif;
  }

  .time {
    display: flex;
    flex-direction: column;
    align-items: center;
    width: 70px;
    margin-left: 2px;
    font: 12px/17px 'Open Sans', sans-serif;
  }

  .corner {
    position: absolute;
    right: 0;
    bottom: 0;
    width: 16px;
    height: 8px;
    background: #eee;
  }
</style>
